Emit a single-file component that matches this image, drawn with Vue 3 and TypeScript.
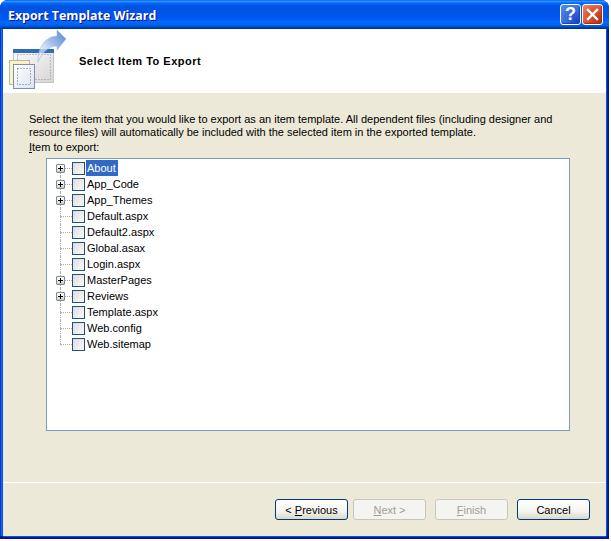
<template>
  <div class="wizard">
    <div class="title-bar">
      <span class="title">Export Template Wizard</span>
      <div class="caption-buttons">
        <button class="caption help">?</button>
        <button class="caption close">
          <svg width="13" height="13" viewBox="0 0 13 13">
            <path d="M2 2 L11 11 M11 2 L2 11" stroke="#fff" stroke-width="2.4" stroke-linecap="square" fill="none" />
          </svg>
        </button>
      </div>
    </div>

    <div class="client">
      <header class="banner">
        <svg class="banner-icon" width="60" height="60" viewBox="0 2 60 60">
          <defs>
            <linearGradient id="pageFill" x1="0" y1="0" x2="1" y2="1">
              <stop offset="0" stop-color="#fdfdfd" />
              <stop offset="1" stop-color="#d6d6d6" />
            </linearGradient>
            <linearGradient id="frontFill" x1="0" y1="0" x2="1" y2="1">
              <stop offset="0" stop-color="#ffffff" />
              <stop offset="1" stop-color="#dde3ee" />
            </linearGradient>
            <linearGradient id="arrowFill" x1="0" y1="1" x2="1" y2="0">
              <stop offset="0" stop-color="#ffffff" stop-opacity="0.5" />
              <stop offset="0.55" stop-color="#a4c0e8" />
              <stop offset="1" stop-color="#4f82d0" />
            </linearGradient>
          </defs>
          <rect x="4.5" y="21.5" width="40" height="33" fill="url(#pageFill)" stroke="#c4c4c4" />
          <rect x="4" y="21" width="41" height="4" fill="#2f6cb8" />
          <rect x="8.5" y="26.5" width="33" height="25" fill="none" stroke="#7f8ba0" stroke-dasharray="1 2" />
          <path d="M29 34 C29 20 35 9 48 8 L48 2 L57 11 L48 22 L48 18 C40 18 33 24 29 34 Z" fill="url(#arrowFill)" stroke="#9db8df" stroke-width="0.6" />
          <rect x="0.5" y="32.5" width="20" height="24" fill="#f7f4cc" stroke="#bdb98e" />
          <rect x="4.5" y="36.5" width="21" height="24" fill="url(#frontFill)" stroke="#7f8faa" />
          <rect x="8.5" y="40.5" width="13" height="16" fill="none" stroke="#5d6c88" stroke-dasharray="1 2" />
        </svg>
        <h1>Select Item To Export</h1>
      </header>

      <main class="content">
        <p class="intro">
          Select the item that you would like to export as an item template. All dependent files (including designer and<br />
          resource files) will automatically be included with the selected item in the exported template.
        </p>
        <label class="tree-label"><u>I</u>tem to export:</label>
        <div class="tree">
          <div v-for="(item, i) in items" :key="item.name" class="row">
            <span class="branch" :class="{ first: i === 0, last: i === items.length - 1 }">
              <span v-if="item.folder" class="expander">
                <svg width="9" height="9" viewBox="0 0 9 9">
                  <path d="M2 4.5 H7 M4.5 2 V7" stroke="#000" fill="none" />
                </svg>
              </span>
            </span>
            <span class="check"></span>
            <span class="name" :class="{ selected: i === 0 }">{{ item.name }}</span>
          </div>
        </div>
      </main>

      <footer class="actions">
        <button class="btn default"><span>&lt; <u>P</u>revious</span></button>
        <button class="btn" disabled><span><u>N</u>ext &gt;</span></button>
        <button class="btn finish" disabled><span><u>F</u>inish</span></button>
        <button class="btn default cancel"><span>Cancel</span></button>
      </footer>
    </div>
  </div>
</template>

<script setup lang="ts">
type Item = { name: string; folder: boolean }

const items: Item[] = [
  { name: 'About', folder: true },
  { name: 'App_Code', folder: true },
  { name: 'App_Themes', folder: true },
  { name: 'Default.aspx', folder: false },
  { name: 'Default2.aspx', folder: false },
  { name: 'Global.asax', folder: false },
  { name: 'Login.aspx', folder: false },
  { name: 'MasterPages', folder: true },
  { name: 'Reviews', folder: true },
  { name: 'Template.aspx', folder: false },
  { name: 'Web.config', folder: false },
  { name: 'Web.sitemap', folder: false },
]
</script>

<style>
html,
body {
  background: #fff;
}
</style>

<style scoped>
.wizard {
  width: 609px;
  height: 539px;
  display: flex;
  flex-direction: column;
  font-family: "Liberation Sans", sans-serif;
  font-size: 11px;
  color: #000;
  border-radius: 8px 8px 0 0;
  overflow: hidden;
  background: #00138c;
}

.title-bar {
  height: 29px;
  flex: none;
  display: flex;
  align-items: center;
  justify-content: space-between;
  padding: 0 6px 0 8px;
  background: linear-gradient(
    180deg,
    #0058e6 0%,
    #3a93ff 4%,
    #288eff 6%,
    #127dff 8%,
    #036ffc 10%,
    #0262ee 14%,
    #0057e5 20%,
    #0054e3 24%,
    #0055eb 56%,
    #005bf5 66%,
    #026afe 76%,
    #0062ef 86%,
    #0052d6 92%,
    #0040ab 94%,
    #003092 100%
  );
}

.title {
  font-family: "Open Sans", sans-serif;
  font-weight: 700;
  font-size: 12.4px;
  padding-top: 2px;
  color: #fff;
  text-shadow: 1px 1px 0 #0f1089;
}

.caption-buttons {
  display: flex;
  gap: 1px;
}

.caption {
  width: 21px;
  height: 21px;
  padding: 0;
  display: flex;
  align-items: center;
  justify-content: center;
  border: 1px solid #fff;
  border-radius: 3px;
  color: #fff;
  font-family: "Liberation Sans", sans-serif;
  font-size: 18px;
  font-weight: 700;
}

.help {
  background: radial-gradient(circle at 85% 85%, #1d44c8 0%, #3a6be0 50%, #5b8cf0 100%);
  box-shadow: inset -1px -1px 1px #1b3fb5;
}

.close {
  background: radial-gradient(circle at 85% 85%, #b6340f 0%, #dc5532 55%, #e98b6c 100%);
  box-shadow: inset -1px -1px 1px #a72a0a;
}

.client {
  flex: 1;
  min-height: 0;
  display: flex;
  flex-direction: column;
  margin: 0 3px 3px;
  background: #ece9d8;
  box-shadow:
    -1px 0 0 #0855dd,
    -2px 0 0 #166aee,
    -3px 0 0 #0831d9,
    1px 0 0 #0855dd,
    2px 0 0 #001ea0,
    3px 0 0 #00138c,
    0 1px 0 #0855dd,
    0 2px 0 #001ea0;
}

.banner {
  height: 64px;
  flex: none;
  display: flex;
  align-items: center;
  gap: 10px;
  padding-left: 6px;
  background: #fff;
  overflow: hidden;
}

.banner-icon {
  flex: none;
  align-self: flex-start;
  margin-top: 1px;
}

.banner h1 {
  margin: 0;
  font-size: 11px;
  font-weight: 700;
  letter-spacing: 0.5px;
}

.content {
  flex: 1;
  min-height: 0;
  padding: 20px 0 0 26px;
}

.intro {
  margin: 0;
  line-height: 13px;
  white-space: nowrap;
}

.tree-label {
  display: block;
  line-height: 13px;
  margin-top: 2px;
}

.tree {
  height: 273px;
  box-sizing: border-box;
  margin: 4px 0 0 17px;
  width: 524px;
  padding: 1px 0 0 9px;
  background: #fff;
  border: 1px solid #7f9db9;
}

.row {
  height: 16px;
  display: flex;
  align-items: center;
}

.branch {
  position: relative;
  width: 16px;
  height: 16px;
  flex: none;
}

.branch::before {
  content: "";
  position: absolute;
  left: 4px;
  top: 0;
  bottom: 0;
  border-left: 1px dotted #b0ad9c;
}

.branch::after {
  content: "";
  position: absolute;
  left: 4px;
  right: 0;
  top: 8px;
  border-top: 1px dotted #b0ad9c;
}

.branch.first::before {
  top: 8px;
}

.branch.last::before {
  bottom: 8px;
}

.expander {
  position: absolute;
  z-index: 1;
  left: 0;
  top: 4px;
  width: 9px;
  height: 9px;
  box-sizing: border-box;
  display: flex;
  align-items: center;
  justify-content: center;
  border: 1px solid #7a8aa8;
  border-radius: 1px;
  background: linear-gradient(180deg, #ffffff 0%, #f0efe6 50%, #c9c5b2 100%);
}

.expander svg {
  flex: none;
  margin: -1px;
}

.check {
  width: 13px;
  height: 13px;
  flex: none;
  box-sizing: border-box;
  border: 1px solid #1c5180;
  background: linear-gradient(135deg, #dcdcd7 0%, #f6f6f4 85%, #fff 100%);
}

.name {
  height: 16px;
  line-height: 16px;
  padding: 0 2px;
  white-space: nowrap;
}

.name.selected {
  margin-left: 1px;
  padding: 0 2px 0 1px;
  background: #316ac5;
  color: #fff;
}

.actions {
  height: 54px;
  flex: none;
  box-sizing: border-box;
  display: flex;
  align-items: flex-start;
  padding: 16px 0 0 272px;
  border-top: 1px solid #fff;
}

.btn {
  width: 73px;
  height: 21px;
  padding: 0;
  font: inherit;
  color: #000;
  box-sizing: border-box;
  border: 1px solid #003c74;
  border-radius: 3px;
  background: linear-gradient(180deg, #ffffff 0%, #f4f4ef 60%, #dcd8c8 100%);
}

.btn + .btn {
  margin-left: 5px;
}

.btn.finish,
.btn.cancel {
  margin-left: 9px;
}

.btn:disabled {
  color: #a1a192;
  background: #f4f4f0;
  border-color: #c9c7ba;
}
</style>
